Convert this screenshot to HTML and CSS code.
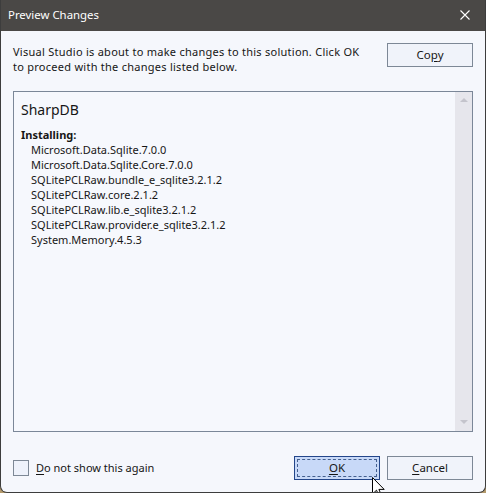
FILE: index.html
```html
<!DOCTYPE html>
<html>
<head>
<meta charset="utf-8">
<link rel="stylesheet" href="styles.css">
</head>
<body>
<div class="window">
  <div class="titlebar">
    <span class="title">Preview Changes</span>
    <svg class="close" width="10" height="10" viewBox="0 0 10 10"><path d="M0.5 0.5 L9.5 9.5 M9.5 0.5 L0.5 9.5" stroke="#ffffff" stroke-width="1.1" fill="none"/></svg>
  </div>
  <div class="content">
    <div class="top">
      <p class="desc">Visual Studio is about to make changes to this solution. Click OK<br>to proceed with the changes listed below.</p>
      <button class="btn">Co<u>p</u>y</button>
    </div>
    <div class="list">
      <div class="list-body">
        <div class="project">SharpDB</div>
        <div class="heading">Installing:</div>
        <ul class="items">
          <li>Microsoft.Data.Sqlite.7.0.0</li>
          <li>Microsoft.Data.Sqlite.Core.7.0.0</li>
          <li>SQLitePCLRaw.bundle_e_sqlite3.2.1.2</li>
          <li>SQLitePCLRaw.core.2.1.2</li>
          <li>SQLitePCLRaw.lib.e_sqlite3.2.1.2</li>
          <li>SQLitePCLRaw.provider.e_sqlite3.2.1.2</li>
          <li>System.Memory.4.5.3</li>
        </ul>
      </div>
      <div class="scrollbar">
        <span class="arrow up"></span>
        <span class="arrow down"></span>
      </div>
    </div>
    <div class="footer">
      <label class="check"><span class="box"></span><span><u>D</u>o not show this again</span></label>
      <div class="buttons">
        <button class="btn primary"><span class="focus"><u>O</u>K</span></button>
        <button class="btn"><u>C</u>ancel</button>
      </div>
    </div>
  </div>
  <svg class="cursor" width="14" height="22" viewBox="0 0 14 22"><path d="M0.5 0.5 L0.5 17 L4.5 13.2 L7.3 19.6 L9.6 18.6 L6.9 12.4 L12.2 12.4 Z" fill="#ffffff" stroke="#000000" stroke-width="1" stroke-linejoin="miter"/></svg>
</div>
</body>
</html>
```

FILE: styles.css
```css
html, body {
  margin: 0;
  padding: 0;
  background: #b49a6c;
}
body {
  width: 486px;
  height: 493px;
  overflow: hidden;
  font-family: "Noto Sans", "Open Sans", sans-serif;
  font-size: 11px;
  color: #161616;
}
.window {
  position: relative;
  width: 486px;
  height: 493px;
  box-sizing: border-box;
  background: #f5f7fc;
  border: 1px solid #3d3d3d;
  border-top: none;
  border-radius: 0 0 7px 7px;
  overflow: hidden;
  display: flex;
  flex-direction: column;
}
.titlebar {
  height: 31px;
  flex: none;
  background: #4a4846;
  color: #ffffff;
  display: flex;
  align-items: center;
  justify-content: space-between;
  padding: 0 16px 0 8px;
  margin: 0 -1px;
  font-size: 11.4px;
}
.title {
  line-height: 16px;
  padding-bottom: 1px;
}
.close {
  display: block;
  margin-top: -1px;
}
.content {
  flex: 1;
  display: flex;
  flex-direction: column;
  padding: 12px 12px 0 12px;
}
.top {
  display: flex;
  justify-content: space-between;
  align-items: flex-start;
  height: 31px;
}
.desc {
  margin: 1px 0 0 0;
  line-height: 15px;
  letter-spacing: 0.26px;
}
.btn {
  width: 86px;
  height: 24px;
  box-sizing: border-box;
  border: 1px solid #7d8896;
  background: #f0f3fa;
  font-family: inherit;
  font-size: 11.5px;
  color: #161616;
  padding: 0;
  margin: 0;
  line-height: 18px;
  display: flex;
  align-items: center;
  justify-content: center;
}
.btn u {
  text-underline-offset: 2px;
}
.list {
  margin-top: 17px;
  height: 341px;
  box-sizing: border-box;
  border: 1px solid #7b8798;
  background: #f6f8fd;
  display: flex;
}
.list-body {
  flex: 1;
  padding: 4px 7px;
}
.project {
  font-size: 14px;
  line-height: 20px;
  margin-top: 4px;
}
.heading {
  font-weight: bold;
  line-height: 15px;
  margin-top: 7px;
}
.items {
  list-style: none;
  margin: 0;
  padding: 0 0 0 10px;
}
.items li {
  line-height: 15px;
}
.scrollbar {
  width: 17px;
  flex: none;
  background: #e6e6ec;
  display: flex;
  flex-direction: column;
  justify-content: space-between;
  align-items: center;
  padding: 6px 0 7px;
}
.arrow {
  width: 0;
  height: 0;
  border-left: 4px solid transparent;
  border-right: 4px solid transparent;
}
.arrow.up {
  border-bottom: 4px solid #c4c4cc;
}
.arrow.down {
  border-top: 4px solid #c4c4cc;
}
.footer {
  margin-top: 24px;
  display: flex;
  justify-content: space-between;
  align-items: center;
  height: 24px;
}
.check {
  display: flex;
  align-items: center;
  gap: 7px;
  line-height: 16px;
}
.check u {
  text-underline-offset: 2px;
}
.box {
  width: 16px;
  height: 16px;
  box-sizing: border-box;
  border: 1px solid #7d8896;
  background: #eef2fb;
}
.buttons {
  display: flex;
  gap: 7px;
}
.btn.primary {
  background: #c8d9f8;
  border-color: #23468a;
  padding: 2px;
}
.focus {
  flex: 1;
  align-self: stretch;
  border: 1px dashed #44608f;
  display: flex;
  align-items: center;
  justify-content: center;
}
.cursor {
  position: absolute;
  left: 371px;
  top: 477px;
}
```
